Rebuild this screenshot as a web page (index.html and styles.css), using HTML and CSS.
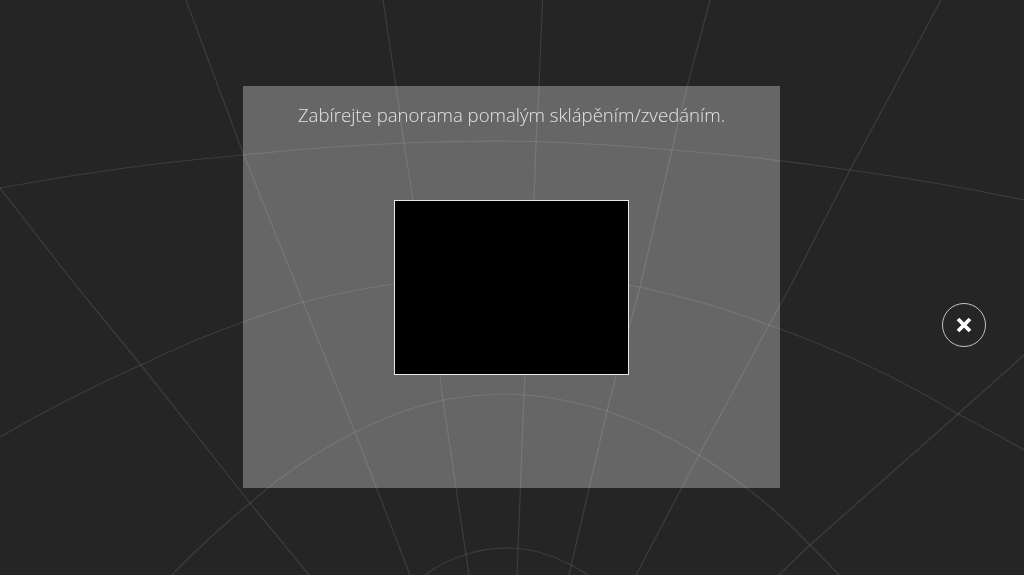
FILE: index.html
```html
<!DOCTYPE html>
<html lang="cs">
<head>
<meta charset="utf-8">
<title>Panorama</title>
<link rel="stylesheet" href="styles.css">
</head>
<body>
<main class="stage">
  <svg class="grid-lines" viewBox="0 0 1024 575" width="1024" height="575" aria-hidden="true">
    <path d="M186 0L243 153L303 302L355 432L410 575"/>
    <path d="M383 0L396 87L404 143L413 200L440 376L443 400L469 575"/>
    <path d="M542.6 0L539 87L536 143L534 200L525 376L524 393L517 575"/>
    <path d="M710 0L687 87L672 150L640 287L616 376L607 411L569 575"/>
    <path d="M941 0L850 170L790 287L769 325L699 455L636 575"/>
    <path d="M0 188L77 287L141 365L250 503L309 575"/>
    <path d="M1024 355L958 414L810 545L779 575"/>
    <path d="M0 188A2500 2500 0 0 1 243 155A2500 2500 0 0 1 404 143A2500 2500 0 0 1 536 141.500A2500 2500 0 0 1 672 150A2500 2500 0 0 1 850 170A2500 2500 0 0 1 1024 200"/>
    <path d="M0 437A1400 1400 0 0 1 141 365A1000 1000 0 0 1 243 322A872 872 0 0 1 303 302A872 872 0 0 1 512 275A872 872 0 0 1 639 287A872 872 0 0 1 769 325A1000 1000 0 0 1 958 414A1400 1400 0 0 1 1024 450"/>
    <path d="M172 575A900 900 0 0 1 250 503A520 520 0 0 1 355 432A397 397 0 0 1 443 400A397 397 0 0 1 512 394A397 397 0 0 1 607 411A420 420 0 0 1 699 455A560 560 0 0 1 810 545A900 900 0 0 1 839 575"/>
    <path d="M425 575A135 135 0 0 1 467 554A135 135 0 0 1 512 548A135 135 0 0 1 569 564A135 135 0 0 1 588 575"/>
  </svg>
  <div class="spacer"></div>
  <section class="panel">
    <p class="hint">Zabírejte panorama pomalým sklápěním/zvedáním.</p>
    <div class="viewfinder"></div>
  </section>
  <div class="actions">
    <button class="close" type="button" aria-label="Zavřít">
      <svg viewBox="0 0 18 18" width="18" height="18" aria-hidden="true">
        <path d="M3 3L15 15M15 3L3 15"/>
      </svg>
    </button>
  </div>
</main>
</body>
</html>
```
FILE: styles.css
```css
* { box-sizing: border-box; }
html, body { margin: 0; height: 100%; }
body { background: #252525; overflow: hidden; }

.stage {
  position: relative;
  width: 1024px;
  height: 575px;
  display: grid;
  grid-template-columns: 243px 537px 1fr;
  align-items: center;
  background: #252525;
  font-family: "Open Sans", "Liberation Sans", sans-serif;
  filter: blur(0.45px);
}

.grid-lines {
  position: absolute;
  left: 0;
  top: 0;
  fill: none;
  stroke: #fff;
  stroke-opacity: 0.11;
  stroke-width: 1.2;
}

.panel {
  position: relative;
  height: 402px;
  margin-top: -1px;
  display: grid;
  grid-template-rows: 1fr auto 1fr;
  justify-items: center;
  background: rgba(255, 255, 255, 0.3);
}

.hint {
  margin: 0;
  padding-top: 16px;
  color: #e4e4e4;
  font-size: 18.600px;
  font-weight: 300;
  line-height: 26px;
  white-space: nowrap;
}

.viewfinder {
  width: 235px;
  height: 175px;
  background: #000;
  border: 1.500px solid #e8e8e8;
}

.actions {
  position: relative;
  display: flex;
  justify-content: flex-end;
  padding-right: 38px;
}

.close {
  width: 44px;
  height: 44px;
  margin-top: 74px;
  padding: 0;
  display: flex;
  align-items: center;
  justify-content: center;
  background: transparent;
  border: 1.500px solid #c4c4c4;
  border-radius: 50%;
}

.close svg {
  fill: none;
  stroke: #fff;
  stroke-width: 3.800;
}
```
